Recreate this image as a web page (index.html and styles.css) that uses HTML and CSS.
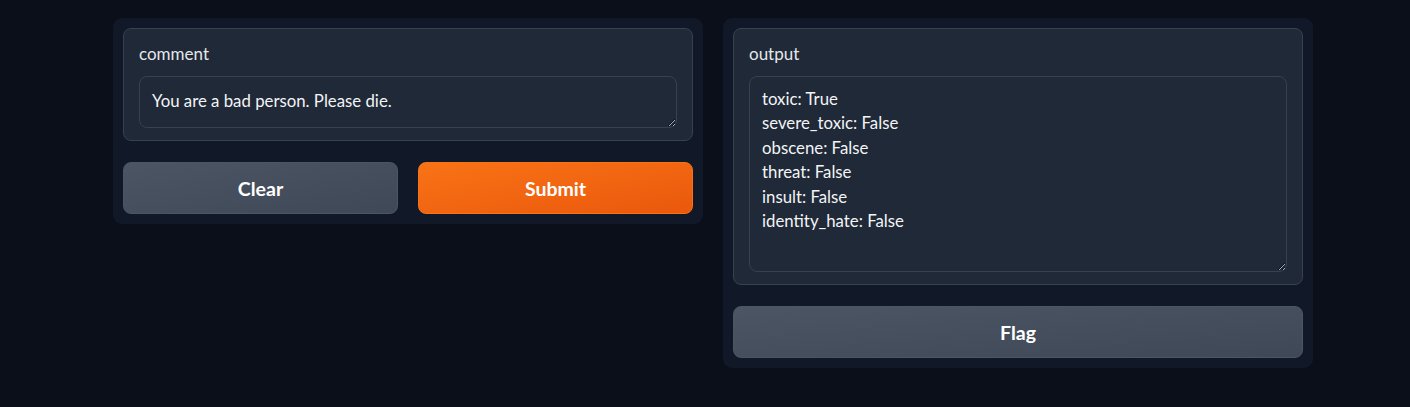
FILE: index.html
```html
<!DOCTYPE html>
<html>
<head>
<meta charset="utf-8">
<link rel="stylesheet" href="styles.css">
</head>
<body>
<div class="row">
  <div class="panel">
    <div class="block">
      <label class="label" for="comment">comment</label>
      <textarea id="comment" class="box box-one">You are a bad person. Please die.</textarea>
    </div>
    <div class="btn-row">
      <button class="btn btn-secondary">Clear</button>
      <button class="btn btn-primary">Submit</button>
    </div>
  </div>
  <div class="panel">
    <div class="block">
      <label class="label" for="output">output</label>
      <textarea id="output" class="box box-seven" readonly>toxic: True
severe_toxic: False
obscene: False
threat: False
insult: False
identity_hate: False</textarea>
    </div>
    <div class="btn-row">
      <button class="btn btn-secondary">Flag</button>
    </div>
  </div>
</div>
</body>
</html>
```
FILE: styles.css
```css
html, body {
  margin: 0;
  padding: 0;
  background: #0b0f19;
  font-family: "Source Sans Pro", Lato, "Liberation Sans", sans-serif;
  color: #e5e7eb;
}
.row {
  display: flex;
  gap: 20px;
  padding: 18px 0 0 113px;
  align-items: flex-start;
}
.panel {
  width: 570px;
  padding: 10px;
  background: #111827;
  border-radius: 9px;
  display: flex;
  flex-direction: column;
  gap: 21px;
}
.block {
  background: #1f2937;
  border: 1px solid #374151;
  border-radius: 8px;
  padding: 15px 15px 12px;
  display: flex;
  flex-direction: column;
  gap: 12px;
}
.label {
  font-size: 17px;
  line-height: 20px;
  color: #e5e7eb;
}
.box {
  box-sizing: border-box;
  width: 100%;
  margin: 0;
  background: #1f2937;
  border: 1px solid #374151;
  border-radius: 8px;
  color: #f3f4f6;
  font-family: inherit;
  font-size: 16.8px;
  line-height: 24.4px;
  padding: 12px 12px;
  resize: vertical;
  outline: none;
  display: block;
  color-scheme: dark;
}
.box-one { height: 52px; }
.box-seven { height: 196px; padding-top: 10px; }
.btn-row {
  display: flex;
  gap: 20px;
}
.btn {
  flex: 1;
  height: 52px;
  border-radius: 8px;
  font-family: inherit;
  font-size: 19.5px;
  font-weight: 700;
  color: #ffffff;
  cursor: pointer;
}
.btn-secondary {
  background: linear-gradient(to bottom right, #4b5563, #3f4856);
  border: 1px solid #4b5563;
}
.btn-primary {
  background: linear-gradient(to bottom right, #f97316, #ea580c);
  border: 1px solid #f97316;
}
```
